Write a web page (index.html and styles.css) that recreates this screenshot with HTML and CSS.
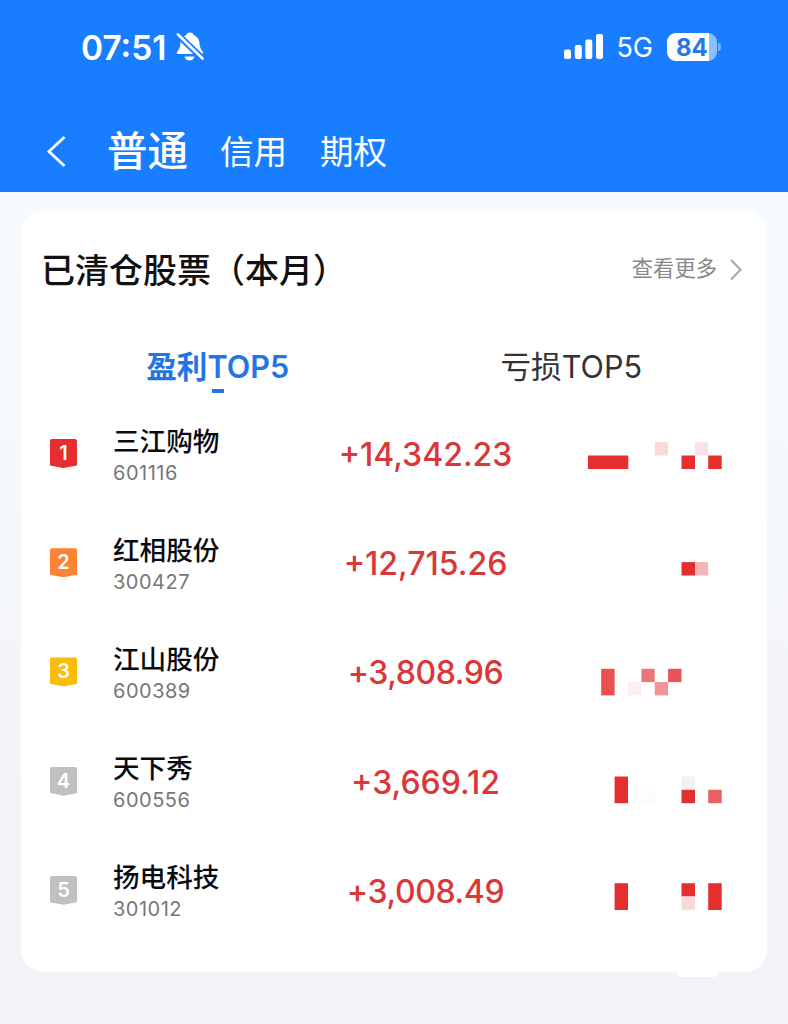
FILE: index.html
```
<!DOCTYPE html>
<html lang="zh-CN">
<head>
<meta charset="utf-8">
<title>已清仓股票</title>
<link rel="stylesheet" href="styles.css">
</head>
<body>
<header class="header">
  <div class="status">
    <div class="status-left">
      <span class="time">07:51</span>
      <svg class="bell" width="28" height="30" viewBox="0 0 28 30">
        <path fill="#fff" d="M14 .5c2 0 3.400 1 3.800 2.400 3.700 1.500 5.400 4.400 5.700 8.200.3 4.400 1.200 6.400 3.200 8.300.8.900.5 2.600-1.100 2.600H2.400c-1.600 0-1.900-1.700-1.100-2.600 2-1.900 2.900-3.900 3.200-8.300.3-3.800 2-6.700 5.700-8.200C10.600 1.500 12 .5 14 .5z"/>
        <path fill="#fff" d="M8.500 24.500h10c-.7 2.800-2.500 4-5 4s-4.300-1.200-5-4z"/>
        <path stroke="#187eff" stroke-width="6.400" d="M0 1l28 27"/>
        <path stroke="#fff" stroke-width="2.600" stroke-linecap="round" d="M2 2.500l24.500 24"/>
      </svg>
    </div>
    <div class="status-right">
      <svg width="40" height="26" viewBox="0 0 40 26" fill="#fff">
        <rect x="0" y="15.500" width="7" height="9.500" rx="2"/>
        <rect x="10.800" y="11" width="7" height="14" rx="2"/>
        <rect x="21.300" y="5.500" width="7" height="19.500" rx="2"/>
        <rect x="32" y="0" width="7" height="25" rx="2"/>
      </svg>
      <span class="network">5G</span>
      <div class="battery"><span class="battery-level">84</span></div>
      <i class="battery-cap"></i>
    </div>
  </div>
  <nav class="nav">
    <svg class="back" width="22" height="34" viewBox="0 0 22 34"><path d="M19.500 3L4 17.500 19.500 32" fill="none" stroke="#fff" stroke-width="2.800"/></svg>
    <span class="nav-item active">普通</span>
    <span class="nav-item">信用</span>
    <span class="nav-item">期权</span>
  </nav>
</header>
<main class="card">
  <div class="card-head">
    <h1 class="title">已清仓股票（本月）</h1>
    <div class="more"><span class="more-label">查看更多</span><svg width="14" height="24" viewBox="0 0 14 24"><path d="M2 2l9.500 9.700L2 21.500" fill="none" stroke="#a9a9a9" stroke-width="2.200"/></svg></div>
  </div>
  <div class="tabs">
    <div class="tab selected"><span class="tab-label">盈利TOP5</span></div>
    <div class="tab"><span class="tab-label">亏损TOP5</span></div>
  </div>
  <ul class="list">
    <li class="row">
      <div class="rank red"><span>1</span></div>
      <div class="stock"><b class="name">三江购物</b><span class="code">601116</span></div>
      <span class="amount">+14,342.23</span>
      <svg class="mosaic" viewBox="588 399 134 109" fill="#e62e2f"><path d="M588 455.500h40.300V469H588zM681.500 455.500H695V469h-13.500zM708.200 455.500h13.500V469h-13.500z"/><path fill="#f9dadb" d="M654.700 442.200h13.400v13.300h-13.400z"/><path fill="#f8e1e5" d="M695 442.200h13.200v13.300H695z"/></svg>
    </li>
    <li class="row">
      <div class="rank orange"><span>2</span></div>
      <div class="stock"><b class="name">红相股份</b><span class="code">300427</span></div>
      <span class="amount">+12,715.26</span>
      <svg class="mosaic" viewBox="588 508.200 134 109" fill="#e62e2f"><path d="M681.500 562.300H695v13.400h-13.500z"/><path fill="#f2b6b9" d="M695 562.300h13.200v13.400H695z"/></svg>
    </li>
    <li class="row">
      <div class="rank yellow"><span>3</span></div>
      <div class="stock"><b class="name">江山股份</b><span class="code">600389</span></div>
      <span class="amount tight">+3,808.96</span>
      <svg class="mosaic" viewBox="588 617.400 134 109"><path fill="#e9504f" d="M601.200 669.200h13.400v26.600h-13.400z"/><path fill="#fbeef0" d="M628 682.500h13.400v13.300H628z"/><path fill="#ed757a" d="M641.400 669.200h13.300v13.300h-13.300z"/><path fill="#f29497" d="M654.700 682.500h13.400v13.300h-13.400z"/><path fill="#e95459" d="M668.100 669.200h13.400v13.300h-13.400z"/></svg>
    </li>
    <li class="row">
      <div class="rank gray"><span>4</span></div>
      <div class="stock"><b class="name">天下秀</b><span class="code">600556</span></div>
      <span class="amount">+3,669.12</span>
      <svg class="mosaic" viewBox="588 726.600 134 109"><path fill="#e62e2f" d="M614.600 776.100H628v26.700h-13.400z"/><path fill="#fdfbfc" d="M641.400 789.400h13.300v13.400h-13.300z"/><path fill="#f9eff1" d="M681.500 776.100H695v13.300h-13.500z"/><path fill="#df3033" d="M681.500 789.400H695v13.400h-13.500z"/><path fill="#e85f64" d="M708.200 789.400h13.500v13.400h-13.500z"/></svg>
    </li>
    <li class="row">
      <div class="rank gray"><span>5</span></div>
      <div class="stock"><b class="name">扬电科技</b><span class="code">301012</span></div>
      <span class="amount tight">+3,008.49</span>
      <svg class="mosaic" viewBox="588 835.800 134 109"><path fill="#e62e2f" d="M614.600 883H628v26.700h-13.400zM681.500 883H695v13.300h-13.500zM708.200 883h13.500v26.700h-13.500z"/><path fill="#f8dad8" d="M681.500 896.300H695v13.400h-13.500z"/></svg>
    </li>
  </ul>
  <i class="card-notch"></i>
</main>
</body>
</html>
```
FILE: styles.css
```
* { box-sizing: border-box; }
body {
  margin: 0;
  height: 1024px;
  overflow: hidden;
  font-family: Inter, "Noto Sans CJK SC", sans-serif;
  background: linear-gradient(#f7fbff 192px, #f5f9fe 400px, #f2f3f8 800px);
}
svg { display: block; flex: none; }
.header { height: 192px; background: #187eff; color: #fff; }
.status {
  display: flex;
  justify-content: space-between;
  height: 94px;
  padding: 0 67px 0 81px;
  align-items: center;
}
.status-left, .status-right { display: flex; align-items: center; }
.time { font-size: 33.500px; font-weight: 600; line-height: 40px; padding-top: 2px; }
.bell { margin-left: 9px; }
.network { margin-left: 12px; font-size: 27px; line-height: 34px; padding-top: 2px; }
.battery {
  width: 50px;
  height: 28px;
  margin-left: 14px;
  border-radius: 9px;
  overflow: hidden;
  background: #8cbfff;
}
.battery-level {
  display: block;
  width: 42px;
  height: 28px;
  padding-left: 9px;
  background: #fff;
  color: #2579df;
  font-size: 24px;
  font-weight: 700;
  line-height: 29px;
}
.battery-cap { width: 3px; height: 8px; margin-left: 1px; border-radius: 0 3px 3px 0; background: #73b0ff; }
.nav { display: flex; align-items: center; height: 114px; padding-left: 45px; }
.nav-item { font-size: 33.500px; line-height: 48px; margin-right: 33px; padding-top: 1px; }
.nav-item.active { font-size: 40.500px; font-weight: 500; margin: 0 32px 0 40px; padding-top: 2px; }
.card {
  position: relative;
  width: 746px;
  height: 761px;
  margin: 19px 0 0 21px;
  background: #fff;
  border-radius: 22px;
}
.card-head {
  display: flex;
  justify-content: space-between;
  align-items: center;
  height: 118px;
  padding: 0 24px 0 20px;
}
.title { margin: 0; padding-top: 2px; font-size: 34px; font-weight: 500; line-height: 48px; color: #111; white-space: nowrap; }
.more { display: flex; align-items: center; gap: 12px; font-size: 21.300px; line-height: 30px; color: #888; }
.more-label { padding-bottom: 4px; }
.tabs { display: flex; height: 70px; padding: 15px 19px 0 20px; }
.tab { flex: 1; display: flex; flex-direction: column; align-items: center; font-size: 30.600px; line-height: 45px; color: #333; }
.tab.selected { color: #2475e3; font-weight: 600; }
.tab.selected::after { content: ""; width: 12px; height: 4px; background: #2475e3; }
.list { margin: 0; padding: 0; list-style: none; }
.row {
  display: grid;
  grid-template-columns: 63px 150px 325px 134px;
  height: 109.200px;
  padding-left: 29px;
  align-items: center;
}
.rank {
  width: 27px;
  height: 29px;
  border-radius: 2px 2px 0 0;
  clip-path: polygon(0 0, 100% 0, 100% 91%, 50% 100%, 0 91%);
  color: #fff;
  font-size: 20px;
  font-weight: 600;
  line-height: 28px;
  text-align: center;
}
.red { background: #e62e32; }
.orange { background: #fb8434; }
.yellow { background: #fbbc05; }
.gray { background: #c0c0c0; }
.stock { display: flex; flex-direction: column; }
.name { font-size: 26.600px; font-weight: 500; line-height: 38px; color: #080b10; }
.code { font-size: 20px; line-height: 26px; letter-spacing: .5px; color: #777; }
.amount { justify-self: center; padding-top: 3px; font-size: 32px; font-weight: 500; line-height: 40px; color: #d93739; }
.tight { letter-spacing: -.4px; }
.mosaic { width: 134px; height: 109px; align-self: start; }
.card-notch {
  position: absolute;
  left: 655px;
  bottom: -5px;
  width: 44px;
  height: 6px;
  background: #fff;
  border-radius: 0 0 8px 8px;
}
```
